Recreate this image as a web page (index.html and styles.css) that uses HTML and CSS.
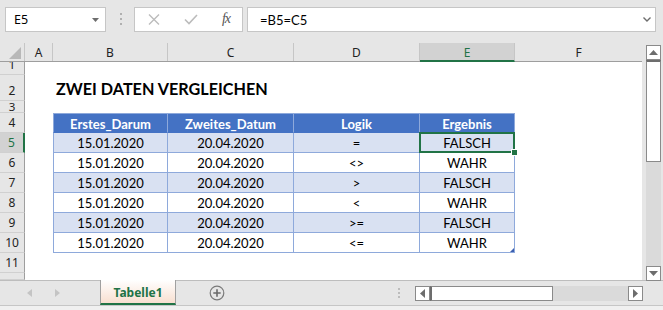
FILE: index.html
```html
<!DOCTYPE html>
<html lang="de">
<head>
  <meta charset="UTF-8" />
  <title>Zwei Daten vergleichen</title>
  <link rel="stylesheet" href="styles.css">
</head>
<body>
  <div class="formula-bar">
    <div class="name-box">
      <span>E5</span>
      <svg class="nb-arrow" width="7" height="4" viewBox="0 0 7 4"><polygon points="0,0 7,0 3.5,4" fill="#6d6d6d"/></svg>
    </div>
    <div class="dots"><i></i><i></i><i></i></div>
    <div class="fx-box">
      <svg width="12" height="11" viewBox="0 0 12 11"><path d="M1 0.5 L11 10.5 M11 0.5 L1 10.5" stroke="#bcbcbc" stroke-width="1.4" fill="none"/></svg>
      <svg width="14" height="11" viewBox="0 0 14 11"><path d="M1 5.5 L5 9.5 L13 1" stroke="#bcbcbc" stroke-width="1.6" fill="none"/></svg>
      <span class="fx">fx</span>
    </div>
    <div class="formula-input">
      <span>=B5=C5</span>
      <svg width="8" height="5" viewBox="0 0 8 5"><path d="M0.5 0.5 L4 4 L7.5 0.5" stroke="#6d6d6d" stroke-width="1.4" fill="none"/></svg>
    </div>
  </div>

  <div class="sheet">
    <div class="grid">
      <div class="col-head">
        <div class="corner">
          <svg width="25" height="18" viewBox="0 0 25 18"><polygon points="9,16 21,4 21,16" fill="#b8b8b8"/></svg>
        </div>
        <div class="ch a">A</div>
        <div class="ch b">B</div>
        <div class="ch cc">C</div>
        <div class="ch d">D</div>
        <div class="ch e active">E</div>
        <div class="ch f">F</div>
      </div>

      <div class="row h13"><div class="rh">1</div></div>
      <div class="row h26">
        <div class="rh">2</div>
        <div class="a"></div>
        <div class="title">ZWEI DATEN VERGLEICHEN</div>
      </div>
      <div class="row h12"><div class="rh">3</div></div>

      <div class="row head">
        <div class="rh">4</div>
        <div class="a"></div>
        <div class="c b">Erstes_Darum</div>
        <div class="c cc">Zweites_Datum</div>
        <div class="c d">Logik</div>
        <div class="c e">Ergebnis</div>
      </div>
      <div class="row band">
        <div class="rh active">5</div>
        <div class="a"></div>
        <div class="c b">15.01.2020</div>
        <div class="c cc">20.04.2020</div>
        <div class="c d">=</div>
        <div class="c e selected">FALSCH<span class="sel"><span class="handle"></span></span></div>
      </div>
      <div class="row">
        <div class="rh">6</div>
        <div class="a"></div>
        <div class="c b">15.01.2020</div>
        <div class="c cc">20.04.2020</div>
        <div class="c d">&lt;&gt;</div>
        <div class="c e">WAHR</div>
      </div>
      <div class="row band">
        <div class="rh">7</div>
        <div class="a"></div>
        <div class="c b">15.01.2020</div>
        <div class="c cc">20.04.2020</div>
        <div class="c d">&gt;</div>
        <div class="c e">FALSCH</div>
      </div>
      <div class="row">
        <div class="rh">8</div>
        <div class="a"></div>
        <div class="c b">15.01.2020</div>
        <div class="c cc">20.04.2020</div>
        <div class="c d">&lt;</div>
        <div class="c e">WAHR</div>
      </div>
      <div class="row band">
        <div class="rh">9</div>
        <div class="a"></div>
        <div class="c b">15.01.2020</div>
        <div class="c cc">20.04.2020</div>
        <div class="c d">&gt;=</div>
        <div class="c e">FALSCH</div>
      </div>
      <div class="row">
        <div class="rh">10</div>
        <div class="a"></div>
        <div class="c b">15.01.2020</div>
        <div class="c cc">20.04.2020</div>
        <div class="c d">&lt;=</div>
        <div class="c e last">WAHR<span class="resize"></span></div>
      </div>
      <div class="row"><div class="rh">11</div></div>
      <div class="row h7"><div class="rh"></div></div>
    </div>

    <div class="vscroll">
      <div class="sb-btn">
        <svg width="9" height="5" viewBox="0 0 9 5"><polygon points="0,5 9,5 4.5,0" fill="#6d6d6d"/></svg>
      </div>
      <div class="sb-thumb"></div>
      <div class="sb-track"></div>
      <div class="sb-btn">
        <svg width="9" height="5" viewBox="0 0 9 5"><polygon points="0,0 9,0 4.5,5" fill="#6d6d6d"/></svg>
      </div>
    </div>
  </div>

  <div class="tab-bar">
    <div class="tab-nav">
      <svg width="5" height="8" viewBox="0 0 5 8"><polygon points="5,0 5,8 0,4" fill="#c4c4c4"/></svg>
      <svg width="5" height="8" viewBox="0 0 5 8"><polygon points="0,0 0,8 5,4" fill="#c4c4c4"/></svg>
    </div>
    <div class="tab">Tabelle1</div>
    <svg class="add-sheet" width="16" height="16" viewBox="0 0 16 16">
      <circle cx="8" cy="8" r="6.8" fill="none" stroke="#7a7a7a" stroke-width="1.2"/>
      <path d="M8 4.3 V11.7 M4.3 8 H11.7" stroke="#6a6a6a" stroke-width="1.6"/>
    </svg>
    <div class="dots h"><i></i><i></i><i></i></div>
    <div class="hscroll">
      <div class="sb-btn">
        <svg width="5" height="9" viewBox="0 0 5 9"><polygon points="5,0 5,9 0,4.5" fill="#6d6d6d"/></svg>
      </div>
      <div class="sb-thumb"></div>
      <div class="sb-track"></div>
      <div class="sb-btn">
        <svg width="5" height="9" viewBox="0 0 5 9"><polygon points="0,0 0,9 5,4.5" fill="#6d6d6d"/></svg>
      </div>
    </div>
  </div>
  <div class="status"></div>
</body>
</html>
```

FILE: styles.css
```css
:root {
  --chrome: #e6e6e6;
  --line: #c6c6c6;
  --head-line: #ababab;
  --green: #217346;
  --tbl-blue: #4472c4;
  --tbl-band: #d9e1f2;
  --tbl-line: #8ea9db;
}

* {
  box-sizing: border-box;
}

body {
  margin: 0;
  width: 663px;
  height: 310px;
  overflow: hidden;
  background: var(--chrome);
  font-family: "Noto Sans", "Open Sans", sans-serif;
  font-size: 12px;
  color: #222;
}

/* formula bar */
.formula-bar {
  height: 43px;
  display: flex;
  align-items: flex-start;
  padding: 7px 0 0 5px;
}

.name-box,
.fx-box,
.formula-input {
  height: 25px;
  background: #fff;
  border: 1px solid var(--line);
  display: flex;
  align-items: center;
}

.name-box {
  width: 101px;
  padding: 0 6px 0 8px;
  justify-content: space-between;
  font-size: 12.5px;
  color: #000;
}

.dots {
  display: flex;
  flex-direction: column;
  gap: 3px;
  margin: 6px 12px 0 14px;
}

.dots i {
  width: 2px;
  height: 2px;
  background: #b0b0b0;
}

.fx-box {
  width: 109px;
  padding: 0 12px 0 13px;
  justify-content: space-between;
}

.fx {
  font-family: "Liberation Serif", serif;
  font-style: italic;
  font-size: 14px;
  color: #555;
  letter-spacing: -1px;
  margin-top: -2px;
}

.formula-input {
  width: 409px;
  margin-left: 4px;
  padding: 0 4px 0 12px;
  justify-content: space-between;
  font-family: "Lato", sans-serif;
  font-size: 13px;
  color: #000;
}

/* sheet */
.sheet {
  height: 237px;
  display: flex;
}

.grid {
  width: 642px;
  display: flex;
  flex-direction: column;
}

.col-head {
  height: 19px;
  display: flex;
  border-bottom: 1px solid #9e9e9e;
}

.corner {
  width: 25px;
  border-right: 1px solid var(--line);
}

.ch {
  display: flex;
  align-items: center;
  justify-content: center;
  border-right: 1px solid var(--line);
  color: #222;
  font-size: 12px;
  padding-top: 1px;
}

.ch.f {
  border-right: none;
}

.ch.active {
  background: #d2d2d2;
  color: var(--green);
  border-bottom: 2px solid var(--green);
  margin-bottom: -1px;
}

.a { width: 28px; }
.b { width: 115px; }
.cc { width: 126px; }
.d { width: 126px; }
.e { width: 95px; }
.f { width: 127px; }

.row {
  height: 20px;
  display: flex;
  background: #fff;
}

.row.h13 { height: 13px; }
.row.h26 { height: 26px; }
.row.h12 { height: 12px; }
.row.h7 { height: 7px; }

.rh {
  width: 25px;
  flex: none;
  background: var(--chrome);
  border-right: 1px solid #9e9e9e;
  border-bottom: 1px solid #d0d0d0;
  display: flex;
  align-items: flex-end;
  justify-content: center;
  overflow: hidden;
  line-height: 14px;
  padding-bottom: 2px;
  font-size: 12px;
  color: #222;
}

.row.h12 .rh {
  align-items: center;
  line-height: 11px;
  font-size: 11.5px;
  padding-bottom: 0;
  overflow: visible;
}

.rh.active {
  background: #d2d2d2;
  color: var(--green);
  border-right: 2px solid var(--green);
}

.title {
  align-self: flex-end;
  padding: 0 0 3px 3px;
  font-family: "Lato", sans-serif;
  font-weight: 700;
  font-size: 16.2px;
  color: #000;
  white-space: nowrap;
}

/* table */
.c {
  display: flex;
  align-items: center;
  justify-content: center;
  font-family: "Lato", sans-serif;
  font-size: 13px;
  color: #000;
  border-right: 1px solid var(--tbl-line);
  border-bottom: 1px solid var(--tbl-line);
  padding-top: 1px;
}

.c.b {
  border-left: 1px solid var(--tbl-line);
}

.row.head .c {
  background: var(--tbl-blue);
  color: #fff;
  font-weight: 700;
  border-top: 1px solid var(--tbl-line);
  border-bottom-color: var(--tbl-blue);
}

.row.band .c {
  background: var(--tbl-band);
}

.c.selected,
.c.last {
  position: relative;
}

.sel {
  position: absolute;
  left: -1px;
  top: -1px;
  right: -1px;
  bottom: -1px;
  border: 2px solid var(--green);
}

.handle {
  position: absolute;
  right: -5px;
  bottom: -5px;
  width: 7px;
  height: 7px;
  background: var(--green);
  border: 1px solid #fff;
}

.resize {
  position: absolute;
  right: 0;
  bottom: 0;
  width: 0;
  height: 0;
  border-left: 4px solid transparent;
  border-bottom: 4px solid #3b5fb0;
}

/* scroll bars */
.vscroll {
  width: 15px;
  margin: 2px 0 0 4px;
  height: 236px;
  display: flex;
  flex-direction: column;
}

.sb-btn {
  flex: none;
  width: 15px;
  height: 15px;
  background: #fff;
  border: 1px solid #8a8a8a;
  display: flex;
  align-items: center;
  justify-content: center;
}

.vscroll .sb-thumb {
  height: 102px;
  background: #fff;
  border: 1px solid #8a8a8a;
  border-top: 2px solid #6d6d6d;
}

.sb-track {
  flex: 1;
  background: #dadada;
}

/* sheet tabs */
.tab-bar {
  height: 26px;
  display: flex;
  align-items: center;
  border-top: 1px solid #bdbdbd;
  border-bottom: 1px solid var(--line);
}

.tab-nav {
  width: 100px;
  display: flex;
  gap: 23px;
  padding-left: 27px;
}

.tab {
  align-self: stretch;
  margin-top: -1px;
  width: 76px;
  background: linear-gradient(#ffffff, #f8dfd0);
  border-left: 1px solid #a0a0a0;
  border-right: 1px solid #a0a0a0;
  border-bottom: 2px solid var(--green);
  display: flex;
  align-items: center;
  justify-content: center;
  font-weight: 700;
  font-size: 12px;
  color: var(--green);
  padding-top: 1px;
}

.add-sheet {
  margin-left: 33px;
}

.dots.h {
  margin: 0 15px 0 173px;
  gap: 2px;
}

.dots.h i {
  background: #bcbcbc;
}

.hscroll {
  width: 228px;
  height: 15px;
  display: flex;
}

.hscroll .sb-thumb {
  width: 123px;
  background: #fff;
  border: 1px solid #8a8a8a;
  border-left: 2px solid #6d6d6d;
}

.status {
  height: 4px;
  background: #f0f0f0;
}
```
